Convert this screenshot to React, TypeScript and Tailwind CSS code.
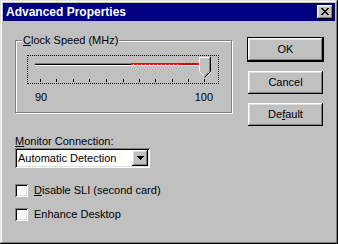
import React from "react";

const font = { fontFamily: '"Liberation Sans", Arial, sans-serif' };

const raised =
  "shadow-[inset_-1px_-1px_#000,inset_1px_1px_#fff,inset_-2px_-2px_#808080,inset_2px_2px_#dfdfdf]";
const sunken =
  "shadow-[inset_1px_1px_#808080,inset_-1px_-1px_#fff,inset_2px_2px_#000,inset_-2px_-2px_#dfdfdf]";

function Slider() {
  const ticks = [13, 29, 46, 62, 79, 96, 112, 128, 145, 161, 177];
  const whites: number[] = [];
  for (let x = 106; x < 152; x += 4) whites.push(x);
  const darks: number[] = [];
  for (let x = 156; x < 171; x += 3) darks.push(x);
  return (
    <div className="w-[192px] h-[29px] border border-dotted border-black box-border relative">
      <svg
        width="192"
        height="29"
        viewBox="0 0 192 29"
        className="absolute -left-px -top-px"
        shapeRendering="crispEdges"
      >
        <rect x="8" y="8" width="172" height="1" fill="#808080" />
        <rect x="8" y="9" width="172" height="1" fill="#000" />
        <rect x="8" y="10" width="172" height="1" fill="#fff" />
        <rect x="104" y="8" width="68" height="2" fill="#ff0000" />
        {whites.map((x) => (
          <rect key={x} x={x} y="9" width="1" height="1" fill="#fff" />
        ))}
        {darks.map((x) => (
          <rect key={x} x={x} y="8" width="1" height="2" fill="#800000" />
        ))}
        {ticks.map((x) => (
          <rect key={x} x={x} y="24" width="1" height="3" fill="#000" />
        ))}
        {/* thumb */}
        <polygon points="172,2 183,2 183,16 178,21 177,21 172,16" fill="#c0c0c0" />
        <polyline points="172.5,16 172.5,2.5 182.5,2.5" fill="none" stroke="#fff" strokeWidth="1" shapeRendering="auto" />
        <polyline points="183.5,2 183.5,16.5 177.5,22.5" fill="none" stroke="#000" strokeWidth="1" shapeRendering="auto" />
        <polyline points="182.5,3 182.5,16 177.5,21" fill="none" stroke="#808080" strokeWidth="1" shapeRendering="auto" />
        <polyline points="172.5,16.5 177,21" fill="none" stroke="#fff" strokeWidth="1" shapeRendering="auto" />
      </svg>
    </div>
  );
}

function Checkbox({ children }: { children: React.ReactNode }) {
  return (
    <div className="flex items-center h-[13px]">
      <div className={`w-[13px] h-[13px] bg-white ${sunken}`} />
      <span className="ml-[6px] text-[11px] leading-[13px] text-black">{children}</span>
    </div>
  );
}

function Button({ children, isDefault }: { children: React.ReactNode; isDefault?: boolean }) {
  const inner = (
    <div
      className={`w-[75px] h-[23px] bg-[#c0c0c0] ${raised} flex items-center justify-center text-[11px] text-black`}
    >
      {children}
    </div>
  );
  if (isDefault) return <div className="border border-black w-[77px]">{inner}</div>;
  return <div className="ml-px">{inner}</div>;
}

export default function App() {
  return (
    <div
      style={font}
      className="w-[338px] h-[244px] bg-[#c0c0c0] p-[3px] flex flex-col shadow-[inset_-1px_-1px_#000,inset_1px_1px_#dfdfdf,inset_-2px_-2px_#808080,inset_2px_2px_#fff]"
    >
      <div className="h-[18px] bg-[#000080] flex items-center justify-between pl-[3px] pr-[2px]">
        <span className="text-white font-bold text-[12px] leading-[14px]">Advanced Properties</span>
        <div className={`w-[16px] h-[14px] bg-[#c0c0c0] ${raised} flex items-center justify-center`}>
          <svg width="8" height="7" viewBox="0 0 8 7" shapeRendering="crispEdges" className="-mt-px">
            <path
              d="M0 0h2v1h-2zM6 0h2v1h-2zM1 1h2v1h-2zM5 1h2v1h-2zM2 2h4v1h-4zM3 3h2v1h-2zM2 4h4v1h-4zM1 5h2v1h-2zM5 5h2v1h-2zM0 6h2v1h-2zM6 6h2v1h-2z"
              fill="#000"
            />
          </svg>
        </div>
      </div>

      <div className="flex pl-[12px]">
        <div className="w-[217px] flex flex-col">
          <div className="mt-[19px] h-[73px] border border-[#808080] shadow-[inset_1px_1px_#fff,1px_1px_#fff] relative flex flex-col pl-[11px] pt-[14px]">
            <span className="absolute -top-[7px] left-[6px] px-[1px] bg-[#c0c0c0] text-[11px] leading-[13px] text-black">
              <u>C</u>lock Speed (MHz)
            </span>
            <Slider />
            <div className="w-[192px] flex justify-between pl-[8px] pr-[6px] mt-[7px] text-[11px] leading-[13px] text-black">
              <span>90</span>
              <span>100</span>
            </div>
          </div>

          <div className="mt-[21px] text-[11px] leading-[14px] text-black">
            <u>M</u>onitor Connection:
          </div>
          <div className={`w-[135px] h-[20px] bg-white ${sunken} flex items-center justify-between pl-[3px] pr-[2px]`}>
            <span className="text-[11px] leading-[13px] text-black">Automatic Detection</span>
            <div className={`w-[16px] h-[16px] bg-[#c0c0c0] ${raised} flex items-center justify-center`}>
              <svg width="7" height="4" viewBox="0 0 7 4" shapeRendering="crispEdges">
                <path d="M0 0h7v1h-7zM1 1h5v1h-5zM2 2h3v1h-3zM3 3h1v1h-1z" fill="#000" />
              </svg>
            </div>
          </div>

          <div className="mt-[16px]">
            <Checkbox>
              <u>D</u>isable SLI (second card)
            </Checkbox>
          </div>
          <div className="mt-[11px]">
            <Checkbox>Enhance Desktop</Checkbox>
          </div>
        </div>

        <div className="ml-[15px] mt-[16px] flex flex-col">
          <Button isDefault>OK</Button>
          <div className="mt-[9px]">
            <Button>Cancel</Button>
          </div>
          <div className="mt-[9px]">
            <Button>
              De<u>f</u>ault
            </Button>
          </div>
        </div>
      </div>
    </div>
  );
}
